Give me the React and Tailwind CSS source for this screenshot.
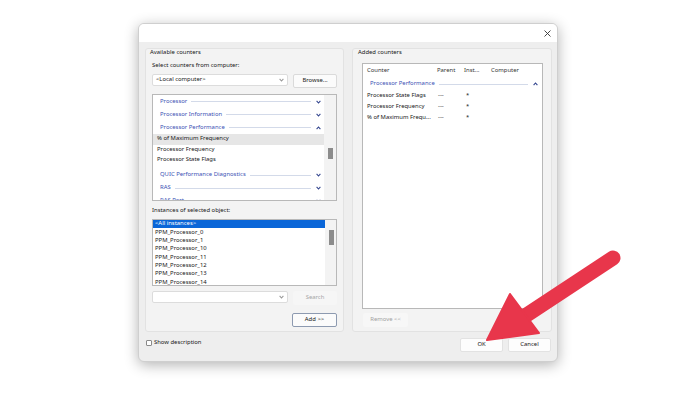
import React from "react";

function Chev({ up = false, color = "#34468f" }) {
  return (
    <svg width="5" height="4" viewBox="0 0 5 4" className="shrink-0">
      <polyline
        points={up ? "0.6,3.2 2.5,1 4.4,3.2" : "0.6,0.9 2.5,3 4.4,0.9"}
        fill="none"
        stroke={color}
        strokeWidth="1.1"
      />
    </svg>
  );
}

function Cat({ label, up }) {
  return (
    <div className="h-[13px] shrink-0 flex items-center pl-[7px] pr-[3px]">
      <span className="text-[#3a50b4] whitespace-nowrap">{label}</span>
      <div className="flex-1 h-px bg-[#d3dae9] ml-[4px] mr-[5px]" />
      <Chev up={up} />
    </div>
  );
}

function Item({ label, hl }) {
  return (
    <div
      className={
        "h-[10.5px] shrink-0 flex items-center pl-[4px] whitespace-nowrap text-[#161616] " +
        (hl ? "bg-[#e6e6e6]" : "")
      }
    >
      {label}
    </div>
  );
}

function Combo({ text }) {
  return (
    <div className="w-[136px] h-[12px] bg-white border border-[#dcdcdc] rounded-[2px] flex items-center pl-[3px] pr-[3px]">
      <span className="flex-1 text-[#161616] whitespace-nowrap">{text}</span>
      <Chev color="#9a9a9a" />
    </div>
  );
}

function Btn({ children, className = "" }) {
  return (
    <div
      className={
        "h-[14px] flex items-center justify-center rounded-[2px] whitespace-nowrap " +
        className
      }
    >
      {children}
    </div>
  );
}

const instances = [
  "PPM_Processor_0",
  "PPM_Processor_1",
  "PPM_Processor_10",
  "PPM_Processor_11",
  "PPM_Processor_12",
  "PPM_Processor_13",
  "PPM_Processor_14",
];

const added = [
  "Processor State Flags",
  "Processor Frequency",
  "% of Maximum Frequ...",
];

export default function App() {
  return (
    <div className="relative w-[700px] h-[393px] bg-white overflow-hidden font-['Noto_Sans','Liberation_Sans',sans-serif] text-[5.9px] leading-none text-[#161616]">
      <div className="pt-[23px] pl-[138px]">
        <div className="w-[420px] h-[339px] rounded-[6px] border border-[#cfcfcf] bg-[#eeeeee] shadow-[0_3px_14px_rgba(0,0,0,0.3)] overflow-hidden flex flex-col">
          {/* title bar */}
          <div className="h-[18px] bg-white flex items-center justify-end pr-[6px] shrink-0">
            <svg width="7" height="7" viewBox="0 0 7 7">
              <line x1="0.5" y1="0.5" x2="6.5" y2="6.5" stroke="#333" strokeWidth="0.9" />
              <line x1="6.5" y1="0.5" x2="0.5" y2="6.5" stroke="#333" strokeWidth="0.9" />
            </svg>
          </div>

          {/* groups */}
          <div className="flex pl-[6px] mt-[6px] gap-[8px]">
            {/* Left group */}
            <div className="w-[199px] h-[284px] bg-[#f3f3f3] border border-[#e2e2e2] rounded-[3px] flex flex-col pl-[6px] pr-[6px]">
              <div className="h-[8px] shrink-0 flex items-center ml-[-2px]">Available counters</div>
              <div className="h-[8px] shrink-0 flex items-center mt-[5px]">Select counters from computer:</div>
              <div className="flex items-start shrink-0 mt-[4px] h-[14px]">
                <Combo text="<Local computer>" />
                <Btn className="ml-auto w-[44px] bg-[#fbfbfb] border border-[#dadada]">Browse...</Btn>
              </div>

              {/* counters list */}
              <div className="mt-[6px] h-[107px] shrink-0 border border-[#b8b8b8] bg-white flex overflow-hidden">
                <div className="flex-1 flex flex-col overflow-hidden">
                  <Cat label="Processor" />
                  <Cat label="Processor Information" />
                  <Cat label="Processor Performance" up />
                  <Item label="% of Maximum Frequency" hl />
                  <Item label="Processor Frequency" />
                  <Item label="Processor State Flags" />
                  <div className="h-[3px] shrink-0" />
                  <Cat label="QUIC Performance Diagnostics" />
                  <Cat label="RAS" />
                  <Cat label="RAS Port" />
                </div>
                <div className="w-[12px] bg-[#f3f3f3] shrink-0">
                  <div className="ml-[4px] mt-[53px] w-[5px] h-[11px] bg-[#8c8c8c]" />
                </div>
              </div>

              <div className="h-[8px] shrink-0 flex items-center mt-[6px]">Instances of selected object:</div>

              {/* instances list */}
              <div className="mt-[4px] h-[67px] shrink-0 border border-[#b8b8b8] bg-white flex overflow-hidden">
                <div className="flex-1 flex flex-col overflow-hidden">
                  <div className="h-[8.33px] shrink-0 flex items-center pl-[2px] bg-[#0a66d8] text-white">
                    &lt;All instances&gt;
                  </div>
                  {instances.map((t) => (
                    <div key={t} className="h-[8.33px] shrink-0 flex items-center pl-[2px]">
                      {t}
                    </div>
                  ))}
                </div>
                <div className="w-[11px] bg-[#f3f3f3] shrink-0">
                  <div className="ml-[4px] mt-[10px] w-[5px] h-[15px] bg-[#8c8c8c]" />
                </div>
              </div>

              <div className="flex items-start shrink-0 mt-[5px] h-[13px]">
                <Combo text="" />
                <Btn className="ml-auto w-[44px] h-[13px] bg-[#f6f6f6] text-[#a5a5a5]">Search</Btn>
              </div>

              <div className="flex justify-end shrink-0 mt-[9px]">
                <Btn className="w-[45px] bg-[#fbfbfb] border border-[#8d9ab0]">Add &gt;&gt;</Btn>
              </div>
            </div>

            {/* Right group */}
            <div className="w-[200px] h-[284px] bg-[#f3f3f3] border border-[#e2e2e2] rounded-[3px] flex flex-col pl-[9px] pr-[8px]">
              <div className="h-[8px] shrink-0 flex items-center ml-[-4px]">Added counters</div>
              <div className="mt-[6px] h-[246px] shrink-0 border border-[#b8b8b8] bg-white flex flex-col">
                <div className="mt-[2px] h-[10px] shrink-0 flex items-center pl-[4px] text-[#333]">
                  <span className="w-[70px]">Counter</span>
                  <span className="w-[27px]">Parent</span>
                  <span className="w-[27px]">Inst...</span>
                  <span>Computer</span>
                </div>
                <div className="mt-[3px] h-[10px] shrink-0 flex items-center pl-[7px] pr-[4px]">
                  <span className="text-[#3a50b4] whitespace-nowrap">Processor Performance</span>
                  <div className="flex-1 h-px bg-[#d3dae9] ml-[4px] mr-[5px]" />
                  <Chev up />
                </div>
                <div className="mt-[2px] flex flex-col">
                  {added.map((t) => (
                    <div key={t} className="h-[10.7px] shrink-0 flex items-center pl-[4px]">
                      <span className="w-[71px] whitespace-nowrap">{t}</span>
                      <span className="w-[28px]">---</span>
                      <span>*</span>
                    </div>
                  ))}
                </div>
              </div>
              <div className="mt-[4px] ml-[1px]">
                <Btn className="w-[45px] h-[13px] bg-[#f7f7f7] text-[#a0a0a0]">Remove &lt;&lt;</Btn>
              </div>
            </div>
          </div>

          {/* footer */}
          <div className="flex items-start pl-[7px] pr-[6px]">
            <div className="mt-[8px] flex items-center gap-[2px]">
              <div className="w-[6px] h-[6px] border border-[#8a8a8a] bg-white rounded-[1px]" />
              <span>Show description</span>
            </div>
            <div className="ml-auto mt-[6px] flex gap-[5px]">
              <Btn className="w-[43px] bg-[#fdfdfd] border border-[#e2e2e2]">OK</Btn>
              <Btn className="w-[43px] bg-[#fdfdfd] border border-[#e2e2e2]">Cancel</Btn>
            </div>
          </div>
        </div>
      </div>

      {/* red arrow */}
      <svg
        className="absolute left-0 top-0 pointer-events-none"
        width="700"
        height="393"
        viewBox="0 0 700 393"
      >
        <line x1="613" y1="258" x2="522" y2="318" stroke="#e8364b" strokeWidth="15" strokeLinecap="round" />
        <polygon points="487,340 510,294 539,333" fill="#e8364b" stroke="#e8364b" strokeWidth="2" strokeLinejoin="round" />
      </svg>
    </div>
  );
}
